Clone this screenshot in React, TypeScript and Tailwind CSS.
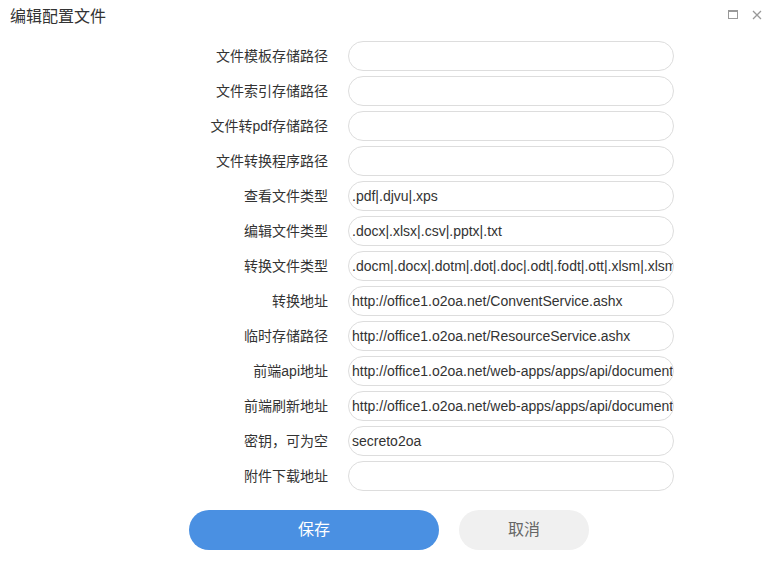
import React from "react";

const rows: [string, string][] = [
  ["文件模板存储路径", ""],
  ["文件索引存储路径", ""],
  ["文件转pdf存储路径", ""],
  ["文件转换程序路径", ""],
  ["查看文件类型", ".pdf|.djvu|.xps"],
  ["编辑文件类型", ".docx|.xlsx|.csv|.pptx|.txt"],
  ["转换文件类型", ".docm|.docx|.dotm|.dot|.doc|.odt|.fodt|.ott|.xlsm|.xlsm|.xltx"],
  ["转换地址", "http://office1.o2oa.net/ConventService.ashx"],
  ["临时存储路径", "http://office1.o2oa.net/ResourceService.ashx"],
  ["前端api地址", "http://office1.o2oa.net/web-apps/apps/api/documents/api.js"],
  ["前端刷新地址", "http://office1.o2oa.net/web-apps/apps/api/documents/cache/files"],
  ["密钥，可为空", "secreto2oa"],
  ["附件下载地址", ""],
];

const font = { fontFamily: '"Microsoft YaHei", "Liberation Sans", "Noto Sans CJK SC", sans-serif' };

export default function App() {
  return (
    <div className="w-[770px] h-[571px] bg-white text-[#333] relative" style={font}>
      <div className="h-[34px] flex items-center pl-[10px]">
        <span className="text-[16px] leading-none text-[#333]">编辑配置文件</span>
      </div>
      <div className="absolute top-[10px] right-[32px] w-[10px] h-[9px] border border-[#999] border-t-2" />
      <svg className="absolute top-[10px] right-[8px]" width="10" height="10" viewBox="0 0 10 10">
        <path d="M1 1 L9 9 M9 1 L1 9" stroke="#999" strokeWidth="1.3" />
      </svg>
      <div className="flex flex-col gap-[5px] mt-[7px]">
        {rows.map(([label, value]) => (
          <div key={label} className="flex items-center h-[30px]">
            <div className="w-[348px] pr-[20px] text-right text-[14px] text-[#333]">{label}</div>
            <div className="w-[326px] h-[30px] border border-[#dddddd] rounded-[15px] overflow-hidden flex items-center pl-[3px]">
              <span
                className="text-[14px] text-[#333] whitespace-nowrap"
                style={{ fontFamily: '"Liberation Sans", Arial, sans-serif' }}
              >
                {value}
              </span>
            </div>
          </div>
        ))}
      </div>
      <div className="flex pl-[189px] gap-[20px] mt-[19px]">
        <button className="w-[250px] h-[40px] rounded-[20px] bg-[#4a90e2] text-white text-[16px]">保存</button>
        <button className="w-[130px] h-[40px] rounded-[20px] bg-[#f0f0f0] text-[#666] text-[16px]">取消</button>
      </div>
    </div>
  );
}
